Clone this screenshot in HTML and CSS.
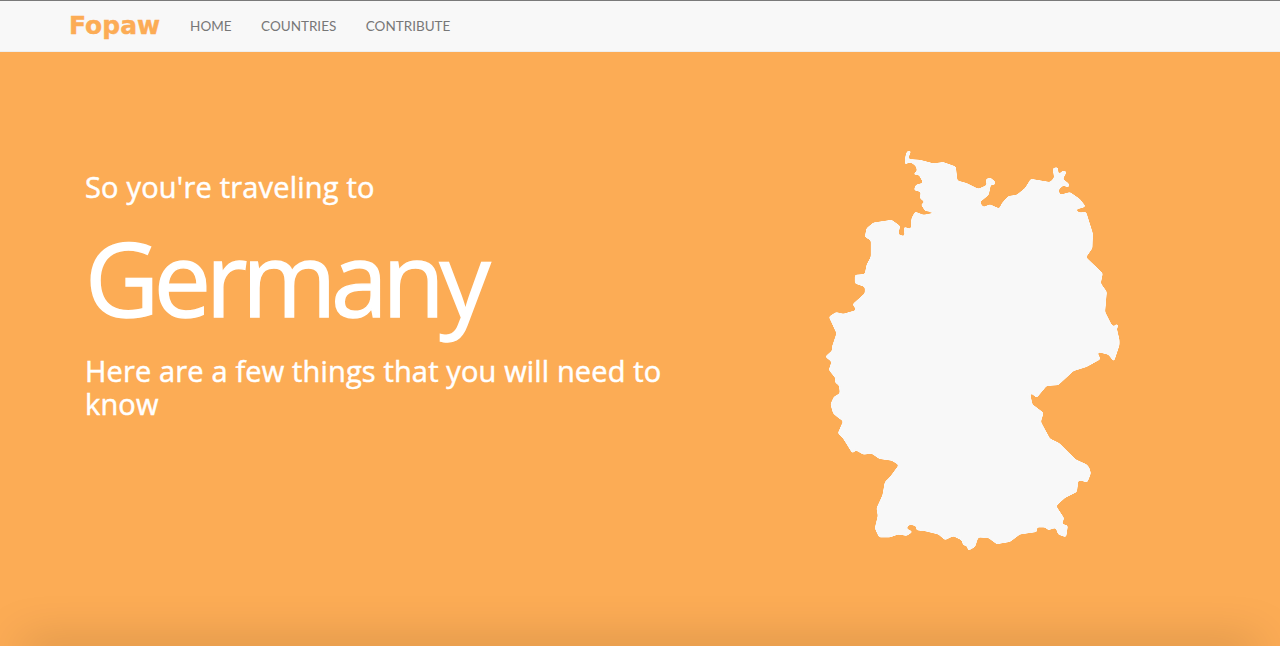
FILE: index.html
```html
<!DOCTYPE html>
<html lang="en">
<head>
  <meta charset="UTF-8" />
  <title>Fopaw - Germany</title>
  <link rel="stylesheet" href="styles.css">
</head>
<body>
  <nav class="navbar">
    <a class="brand" href="#">Fopaw</a>
    <ul class="nav-links">
      <li><a href="#">Home</a></li>
      <li><a href="#">Countries</a></li>
      <li><a href="#">Contribute</a></li>
    </ul>
  </nav>

  <section class="hero">
    <div class="hero-text">
      <h3 class="intro">So you're traveling to</h3>
      <h1 class="country">Germany</h1>
      <h3 class="outro">Here are a few things that you will need to know</h3>
    </div>
    <svg class="country-map" viewBox="820 148 305 408" aria-label="Map of Germany">
      <defs>
        <!-- rounds off the traced corners -->
        <filter id="smooth" color-interpolation-filters="sRGB">
          <feGaussianBlur stdDeviation="0.9" />
          <feComponentTransfer>
            <feFuncA type="linear" slope="6" intercept="-2.5" />
          </feComponentTransfer>
        </filter>
      </defs>
      <g class="map-shape">
        <path d="M904.7 166.7 L905.2 156.7 L907 151 L911.5 150.5 L909.5 155 L908.5 159 L920 159.7 L933.3 163.3 L943.3 162 L955.9 166.4 L957.5 180.5 L966.7 183 L978.3 188.7 L986.7 185 L985.6 179.3 L990 177.2 L995.5 181.7 L994.8 185.2 L991 184.5 L988.8 195 L980 202.3 L983.3 206.9 L990 204.2 L999.3 208.6 L1001.7 203.3 L1008.3 196 L1016.7 194.7 L1025 188 L1030.7 178.7 L1050 182 L1054 177.7 L1052.6 168 L1058 167 L1058.6 174.5 L1062.7 170.6 L1067 171.5 L1063 179 L1069.2 183.7 L1068.8 188 L1063.3 185.4 L1058.6 190 L1060.2 194.7 L1070 192 L1080 199 L1086 206.7 L1075 210 L1080 212.5 L1086.2 211.7 L1092.9 233.3 L1092.5 248.3 L1086.2 257.3 L1102.9 273.3 L1100.9 283.3 L1106.9 291.7 L1105.2 311.7 L1111.9 325 L1116.9 328.3 L1119.6 340 L1119.6 345 L1114 362 L1108.3 354.7 L1097.3 352 L1100.7 359.3 L1086.7 367 L1073.3 371.2 L1068.3 376 L1058.3 385.3 L1046.7 386 L1036.7 398 L1030 392.4 L1032.5 404.3 L1043.7 412.7 L1041 421.7 L1050 438.6 L1059.3 443 L1068.3 452 L1076 459.5 L1086.7 464.3 L1089.5 467.7 L1091 473.3 L1087.5 482.6 L1078.5 480.3 L1077 492 L1065 498 L1056.3 506 L1064.3 518.3 L1062 523.7 L1068 525.5 L1066.2 537.6 L1058 534.6 L1055.7 528 L1048.3 530.3 L1045 527.6 L1036.7 527.6 L1037.3 532 L1020 534.6 L1010 542 L996.7 544.3 L988.3 538 L978.3 537.6 L975.2 547 L968 551 L967 546.3 L963 545.3 L961.5 540.3 L953.3 536.3 L945 540.3 L938.3 534.6 L925 531.3 L916 530.3 L916.3 526.5 L910 524.6 L906.3 528.3 L913 531.7 L906.7 536 L898.3 534.6 L890 537.6 L879 537.6 L874.7 528.3 L877.7 515.7 L876.4 508.3 L882.4 495 L884.7 482 L890 476.7 L898.6 465 L891.7 460.7 L879.3 459 L871.7 453.7 L863.3 454.7 L856 450.4 L852.3 453.6 L843 438.6 L837.7 433.3 L843 421.2 L837.7 417.6 L833 413.5 L830.4 404.3 L833.7 396.7 L839.7 393.3 L839 385.7 L834.7 382.3 L835.4 378.3 L828.7 370 L831.4 361.7 L825 356.7 L832.4 350 L831.4 348.3 L836.4 333.3 L828.7 316.7 L836 312 L843.3 313.7 L856.2 310 L852.4 304.3 L864.7 293.3 L864.7 287 L854.7 283.6 L854.7 274.8 L864.7 274 L866.4 265 L870.7 256.7 L870.7 240.5 L864.7 237 L866.4 228.3 L873.3 222.4 L891.7 219.7 L900.3 226 L898.3 234.3 L904.6 236.3 L903.6 226.4 L910.7 229 L911.4 218.3 L915 211.4 L923.3 214.7 L936.5 212.7 L925 210.9 L920.7 204.3 L924.7 202.3 L919.7 198.3 L920.7 192 L913.7 190.3 L915.7 184.7 L923 182.7 L919 175.3 L912.5 174.6 L917 170.7 L915.7 166.3 L911.7 163 L907.3 163 Z"/>
        <circle cx="1116.5" cy="326" r="2"/>
      </g>
    </svg>
  </section>
</body>
</html>
```

FILE: styles.css
```css
* {
  box-sizing: border-box;
}

html,
body {
  height: 100%;
}

body {
  margin: 0;
  display: flex;
  flex-direction: column;
  overflow: hidden;
  font-family: 'Open Sans', sans-serif;
  background: #fcac55;
}

.navbar {
  height: 52px;
  flex-shrink: 0;
  display: flex;
  align-items: center;
  padding: 0 0 2px 69px;
  background: #f8f8f8;
  border-top: 1px solid #7a7a7a;
  border-bottom: 1px solid #eeeeee;
}

.brand {
  font-family: 'DejaVu Sans', sans-serif;
  font-weight: 700;
  font-size: 25px;
  color: #fcac55;
  text-decoration: none;
  -webkit-text-stroke: 0.4px #fcac55;
}

.nav-links {
  display: flex;
  gap: 29.5px;
  margin: 0 0 0 30px;
  padding: 0;
  list-style: none;
}

.nav-links a {
  font-family: 'Lato', sans-serif;
  font-size: 13.5px;
  color: #777777;
  text-transform: uppercase;
  text-decoration: none;
}

.hero {
  position: relative;
  flex: 1;
  display: flex;
  align-items: flex-start;
  justify-content: space-between;
  padding: 96px 155px 0 85px;
  color: #ffffff;
  overflow: hidden;
}

.hero::after {
  content: "";
  position: absolute;
  left: 22px;
  right: 22px;
  bottom: -12px;
  height: 12px;
  box-shadow: 0 0 46px rgba(0, 0, 0, 0.34);
}

.hero-text {
  width: 600px;
  margin-top: 22px;
}

.intro,
.outro {
  margin: 0;
  font-weight: 400;
  font-size: 29px;
  line-height: 33px;
  -webkit-text-stroke: 0.5px #ffffff;
}

.intro {
  letter-spacing: 0.2px;
}

.outro {
  letter-spacing: 0.15px;
}

.country {
  margin: 13px 0 14px;
  font-weight: 400;
  font-size: 102px;
  line-height: 124px;
  letter-spacing: -5.4px;
  -webkit-text-stroke: 1.4px #ffffff;
}

.country-map {
  width: 305px;
  height: 408px;
  fill: #f8f8f8;
}

.map-shape {
  filter: url(#smooth);
}
```
